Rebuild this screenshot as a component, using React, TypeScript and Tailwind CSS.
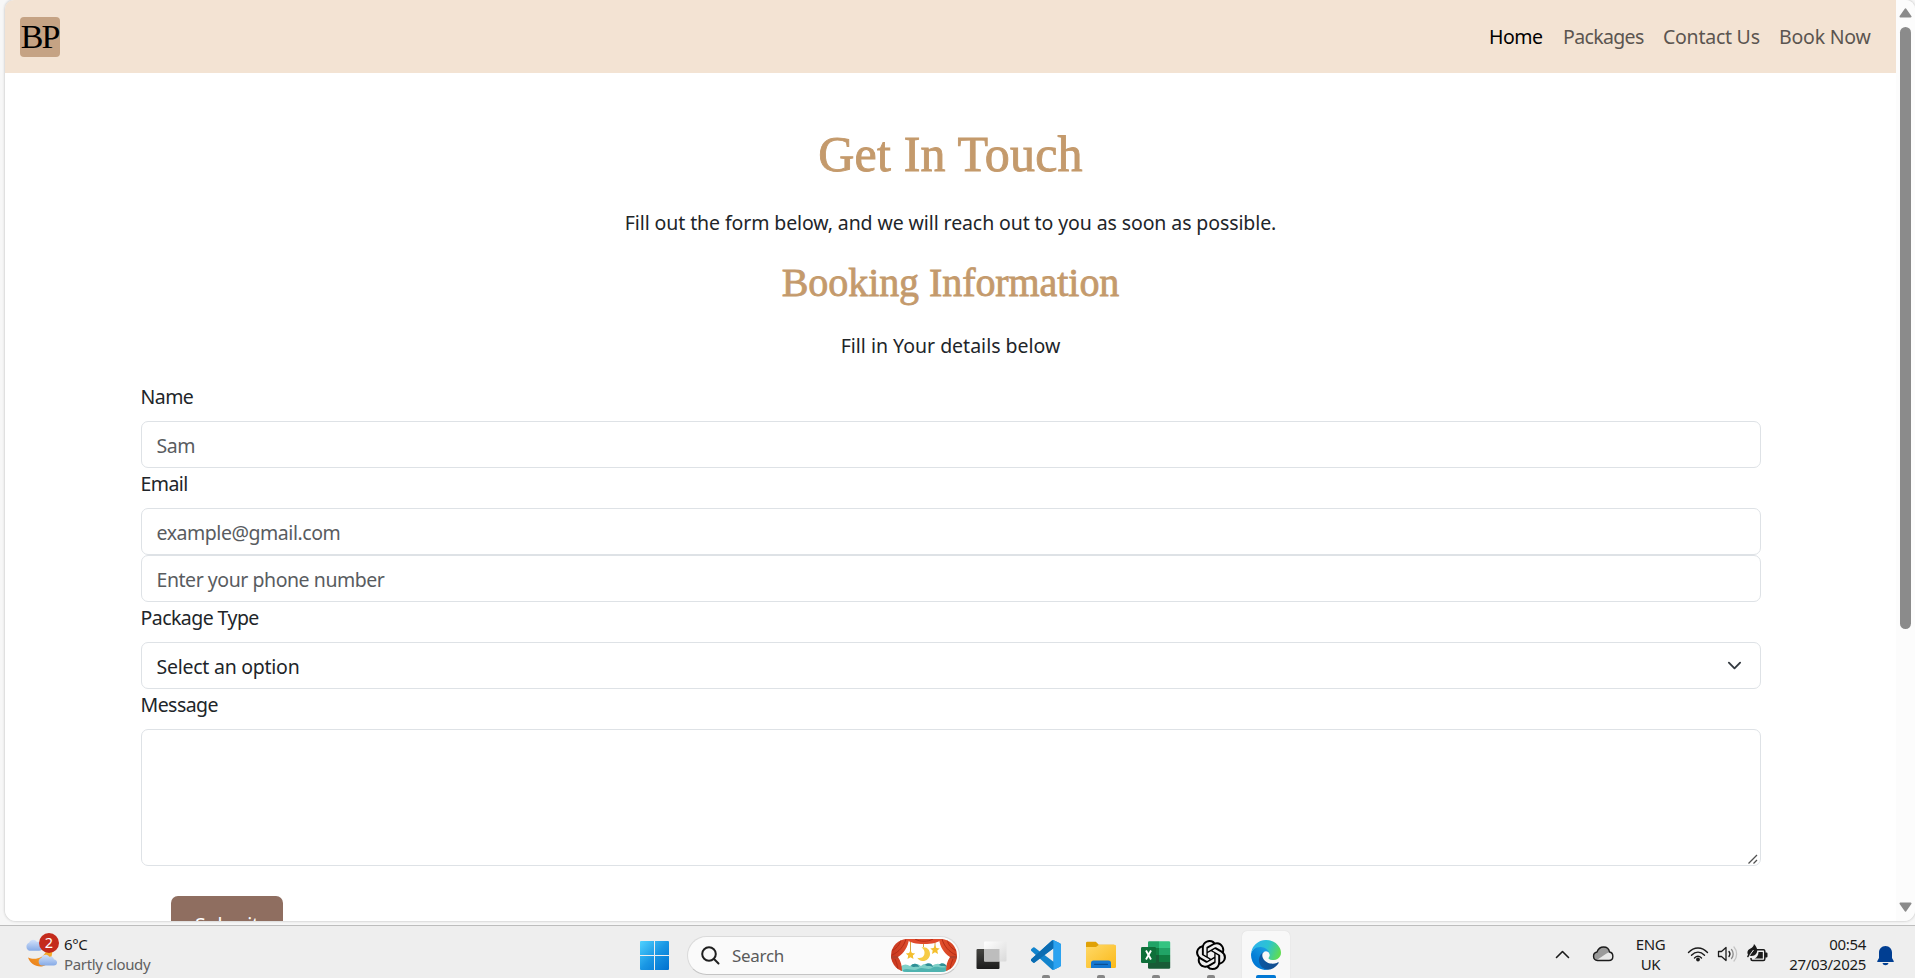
import type { ReactNode } from "react";
import { SiOpenai } from "react-icons/si";

const ui = "font-['Noto_Sans',sans-serif]";
const serif = "font-['Liberation_Serif',serif]";

function Navbar() {
  return (
    <nav className="flex h-[73px] shrink-0 items-start justify-between bg-[#f3e3d3] pl-[15px]">
      <div className={`${serif} mt-[17px] flex h-10 w-10 items-center justify-center overflow-hidden rounded-[4px] bg-[#c5a384] text-[34px] leading-none tracking-[-2px] text-black`}>
        <span className="mr-[1px]">BP</span>
      </div>
      <div className="mt-[22px] mr-[25px] flex text-[19.5px] leading-[30px] text-[#5b5550]">
        <a className="w-[74px] tracking-[-0.5px] text-black">Home</a>
        <a className="w-[100px] tracking-[-0.65px]">Packages</a>
        <a className="w-[116px] tracking-[-0.25px]">Contact Us</a>
        <a className="w-[92px] tracking-[-0.2px] whitespace-nowrap">Book Now</a>
      </div>
    </nav>
  );
}

function Label({ children }: { children: ReactNode }) {
  return <label className="-ml-[0.5px] block h-10 text-[19.5px] leading-[31px] tracking-[-0.55px] whitespace-nowrap text-[#212529]">{children}</label>;
}

function Field({ children }: { children: ReactNode }) {
  return (
    <div className="flex h-[47px] items-center rounded-[7px] border border-[#dee2e6] bg-white px-[15px] pt-[2px] pl-[14.5px] text-[19.5px] leading-[30px] tracking-[-0.45px] text-[#595c5f]">
      {children}
    </div>
  );
}

function BookingPage() {
  return (
    <main className="flex flex-1 flex-col overflow-hidden bg-white">
      <header className="flex flex-col items-center text-[#c49a6c]">
        <h1 className={`${serif} mt-[51px] h-[60px] text-[50px] leading-[60px] tracking-[0.2px] [-webkit-text-stroke:0.9px_#c49a6c]`}>Get In Touch</h1>
        <p className="mt-[23px] text-[19.5px] leading-[31px] tracking-[-0.1px] text-[#212529]">
          Fill out the form below, and we will reach out to you as soon as possible.
        </p>
        <h2 className={`${serif} mt-[21px] h-[48px] text-[40px] leading-[48px] tracking-[-0.07px] [-webkit-text-stroke:0.8px_#c49a6c]`}>Booking Information</h2>
        <p className="mt-[23px] text-[19.5px] leading-[31px] text-[#212529]">Fill in Your details below</p>
      </header>
      <form className="mt-[20px] ml-[136px] w-[1620px]">
        <Label>Name</Label>
        <Field>Sam</Field>
        <Label>Email</Label>
        <Field>example@gmail.com</Field>
        <Field>Enter your phone number</Field>
        <Label>Package Type</Label>
        <Field>
          <span className="flex-1 tracking-[-0.25px] text-[#212529]">Select an option</span>
          <svg className="mr-[3px] -mt-[3px] h-[15px] w-[15px]" viewBox="0 0 16 16" fill="none" stroke="#343a40" strokeWidth="2" strokeLinecap="round" strokeLinejoin="round">
            <path d="m2 5 6 6 6-6" />
          </svg>
        </Field>
        <Label>Message</Label>
        <div className="flex h-[137px] items-end justify-end rounded-[7px] border border-[#dee2e6] bg-white">
          <svg className="mr-[2px] mb-[1px] h-[10px] w-[10px]" viewBox="0 0 10 10" stroke="#505050" strokeWidth="1.3">
            <path d="M0.5 9.5 9 1M5.5 9.5 9 6" />
          </svg>
        </div>
        <div className="mt-[30px] ml-[30px] flex h-[58px] w-[112px] items-center justify-center rounded-[7px] bg-[#8f6e60] text-[19.5px] tracking-[-0.2px] text-white">
          Submit
        </div>
      </form>
    </main>
  );
}

function Scrollbar() {
  return (
    <div className="flex w-[19px] shrink-0 flex-col items-center bg-[#fcfcfc]">
      <svg className="mt-[8px] h-[10px] w-[13px]" viewBox="0 0 13 10">
        <path d="M6.5 1.2 11.6 8.6H1.4z" fill="#8b8b8b" stroke="#8b8b8b" strokeWidth="1.8" strokeLinejoin="round" />
      </svg>
      <div className="mt-[9px] h-[602px] w-[11px] rounded-full bg-[#8b8b8b]" />
      <svg className="mt-auto mb-[9px] h-[10px] w-[13px]" viewBox="0 0 13 10">
        <path d="M6.5 8.8 11.6 1.4H1.4z" fill="#8b8b8b" stroke="#8b8b8b" strokeWidth="1.8" strokeLinejoin="round" />
      </svg>
    </div>
  );
}

function WeatherIcon() {
  return (
    <svg className="h-[36px] w-[36px]" viewBox="0 0 36 36">
      <defs>
        <linearGradient id="cloud" x1="0" y1="0" x2="0" y2="1">
          <stop offset="0" stopColor="#d3e2fa" />
          <stop offset="1" stopColor="#86aae6" />
        </linearGradient>
        <linearGradient id="moon" x1="1" y1="0" x2="0" y2="1">
          <stop offset="0" stopColor="#f9b62c" />
          <stop offset="1" stopColor="#e97a1c" />
        </linearGradient>
      </defs>
      <path d="M4.5 17.800a4.500 4.500 0 0 1-.3-8.400C5.600 6 10 5.800 12 9c3-.8 6 1 6 4.500 0 2.500-1.500 4.300-4 4.300z" fill="url(#cloud)" />
      <path d="M27 15c1.500 8-3 18.500-11.500 18.500C9.500 33.500 5 30 3 24.500c5.500 2.500 15 2 18.500-7z" fill="url(#moon)" />
      <path d="M16.500 32.500a4 4 0 0 1-.2-7.600c1-3.700 6-4.300 8-1.200 3-.8 4.500 1 4.500 2.500 4.500.5 4.200 6.300 0 6.300z" fill="url(#cloud)" />
      <circle cx="24" cy="10" r="10" fill="#c42b1c" />
      <text x="24" y="15.200" textAnchor="middle" fontFamily="Noto Sans" fontSize="14.500" fill="#fff">2</text>
    </svg>
  );
}

function WindowsLogo() {
  return (
    <svg className="h-[29px] w-[29px]" viewBox="0 0 29 29">
      <defs>
        <linearGradient id="win" x1="0" y1="0" x2="29" y2="29" gradientUnits="userSpaceOnUse">
          <stop offset="0" stopColor="#4fd2ff" />
          <stop offset="0.5" stopColor="#1a97e4" />
          <stop offset="1" stopColor="#0070cf" />
        </linearGradient>
      </defs>
      <path d="M1 0h13v14H0V1a1 1 0 0 1 1-1zM15 0h13a1 1 0 0 1 1 1v13H15zM0 15h14v14H1a1 1 0 0 1-1-1zM15 15h14v13a1 1 0 0 1-1 1H15z" fill="url(#win)" />
    </svg>
  );
}

function TheatreArt() {
  return (
    <svg className="h-[33px] w-[66px]" viewBox="0 0 66 33">
      <defs>
        <clipPath id="pill"><rect width="66" height="33" rx="16.500" /></clipPath>
        <linearGradient id="drape" x1="0" y1="0" x2="1" y2="0">
          <stop offset="0" stopColor="#c8371d" />
          <stop offset="0.5" stopColor="#f0603d" />
          <stop offset="1" stopColor="#d2401f" />
        </linearGradient>
      </defs>
      <g clipPath="url(#pill)">
        <rect width="66" height="33" fill="#fff" />
        <path d="M10 27c3-2 6-2 9 0 3-3 7-3 11 0 3-3 7-3 11 0 4-3 8-3 11 0l6-1v8H8z" fill="#7fd0c8" />
        <path d="M20 27c2-4 8-2 8 1-3-1-5 1-8-1zM34 26c2-3 8-2 8 2-3-2-5 0-8-2zM48 26c2-3 7-2 8 2-3-2-5 0-8-2z" fill="#2f8f96" />
        <path d="M12 31c5-3 10 2 15-1s9 2 14-1 9 1 14-1v6H12z" fill="#4fb3b0" />
        <path d="M19.500 0v14M44 0v8M32.500 2v6" stroke="#d9a441" strokeWidth="1" />
        <path d="m19.500 11 1.400 3 3.300.4-2.400 2.200.7 3.300-3-1.700-3 1.700.7-3.300-2.400-2.200 3.300-.4zM44 6l1.400 3 3.300.4-2.400 2.200.7 3.300-3-1.700-3 1.700.7-3.300-2.400-2.200 3.300-.4z" fill="#f4bf2e" />
        <path d="M30.500 8.500c5-1.500 8.500 2 8.500 6.500 0 4.500-4 7.500-8 7-2.500-.4-4-1.800-4.700-3.200 3 .8 6.200-.3 7-3.300.8-3-.3-5.500-2.800-7z" fill="#f6cb45" />
        <path d="M0 0h18C17 8 13 14 7 18c3 4 4 9 4 15H0zM66 0H48c1 8 5 14 11 18-3 4-4 9-4 15h11z" fill="url(#drape)" />
        <path d="M15 0h36c-4 4-10 5-18 5S19 4 15 0z" fill="#e04a2c" />
        <path d="M15 0C13 7 8 13 1 16M10 0C9 6 5 10 0 12M51 0c2 7 7 13 14 16M56 0c1 6 5 10 10 12M4 20c2 4 3 9 3 13M62 20c-2 4-3 9-3 13M24 0c5 3 13 3 18 0" fill="none" stroke="#b52c17" strokeWidth="1" />
        <path d="M0 17h7v2.500H0zM59 17h7v2.500h-7z" fill="#b3402a" />
      </g>
    </svg>
  );
}

function TaskViewIcon() {
  return (
    <svg className="h-[29px] w-[31px]" viewBox="0 0 31 29">
      <defs>
        <linearGradient id="tvd" x1="0" y1="0" x2="0" y2="1"><stop offset="0" stopColor="#454542" /><stop offset="1" stopColor="#1c1c1c" /></linearGradient>
        <linearGradient id="tvl" x1="0" y1="0" x2="1" y2="1"><stop offset="0" stopColor="#fff" /><stop offset="1" stopColor="#d9d9d9" /></linearGradient>
      </defs>
      <rect x="0.500" y="8" width="23" height="20" rx="1" fill="url(#tvd)" />
      <rect x="8" y="0.500" width="22.500" height="20" rx="1" fill="url(#tvl)" />
      <path d="M8 8h15.500v12.500H9a1 1 0 0 1-1-1z" fill="#bdbdbd" />
    </svg>
  );
}

function VsCodeIcon() {
  return (
    <svg className="h-[30px] w-[30px]" viewBox="0 0 24 24">
      <path d="M23.150 2.587 18.210.21a1.494 1.494 0 0 0-1.705.29l-9.460 8.630-4.120-3.128a.999.999 0 0 0-1.276.057L.327 7.261A1 1 0 0 0 .326 8.740L3.899 12 .326 15.260a1 1 0 0 0 .001 1.479L1.650 17.940a.999.999 0 0 0 1.276.057l4.120-3.128 9.460 8.630a1.492 1.492 0 0 0 1.704.29l4.942-2.377A1.500 1.500 0 0 0 24 20.060V3.939a1.500 1.500 0 0 0-.85-1.352zm-5.146 14.861L10.826 12l7.178-5.448v10.896z" fill="#1284cd" />
      <path d="M16.500.5 3.900 12 .33 15.260a1 1 0 0 0 0 1.480l1.320 1.200a1 1 0 0 0 1.280.06L18 6.550V.3z" fill="#0a6cb2" />
      <path d="M18 .2 23.150 2.590A1.500 1.500 0 0 1 24 3.940v16.120a1.500 1.500 0 0 1-.85 1.350L18.210 23.790a1.500 1.500 0 0 1-1.200.03c.6-.2 1-.7 1-1.400V1.600c0-.7-.4-1.200-1-1.400z" fill="#2ba2f0" />
    </svg>
  );
}

function FolderIcon() {
  return (
    <svg className="h-[28px] w-[30px]" viewBox="0 0 30 28">
      <defs><linearGradient id="fold" x1="0" y1="0" x2="1" y2="1"><stop offset="0" stopColor="#ffd968" /><stop offset="1" stopColor="#fbb919" /></linearGradient></defs>
      <path d="M0 2a1.300 1.300 0 0 1 1.300-1.300h8.500l3 3H28v8H0z" fill="#e0a106" />
      <path d="M0 6h10l3-2.300h15.700A1.300 1.300 0 0 1 30 5v20.700a1.300 1.300 0 0 1-1.300 1.300H1.300A1.300 1.300 0 0 1 0 25.700z" fill="url(#fold)" />
      <path d="M5 27v-5a2.500 2.500 0 0 1 2.500-2.500h15A2.500 2.500 0 0 1 25 22v5z" fill="#1377d1" />
      <path d="M8.500 23.300h13" stroke="#0b4f94" strokeWidth="1.200" strokeLinecap="round" />
    </svg>
  );
}

function ExcelIcon() {
  return (
    <svg className="h-[28px] w-[30px]" viewBox="0 0 30 28">
      <path d="M7 1.500A1.300 1.300 0 0 1 8.300.2H18V7H7z" fill="#21a366" />
      <path d="M18 .2h9.900a1.300 1.300 0 0 1 1.300 1.300V7H18z" fill="#33c481" />
      <path d="M7 7h11v7H7z" fill="#107c41" />
      <path d="M18 7h11.200v7H18z" fill="#21a366" />
      <path d="M7 14h11v7H7z" fill="#185c37" />
      <path d="M18 14h11.200v7H18z" fill="#107c41" />
      <path d="M7 21h22.200v5.500a1.300 1.300 0 0 1-1.300 1.300H8.300A1.300 1.300 0 0 1 7 26.500z" fill="#185c37" />
      <rect x="0" y="6" width="15" height="16" rx="1.300" fill="#0e6f39" />
      <path d="m5 9.500 5 9M10 9.500l-5 9" stroke="#fff" strokeWidth="1.900" />
    </svg>
  );
}

function EdgeIcon() {
  return (
    <svg className="h-[30px] w-[30px]" viewBox="0 0 256 256">
      <defs>
        <linearGradient id="e1" x1="63" y1="178" x2="242" y2="178" gradientUnits="userSpaceOnUse"><stop offset="0" stopColor="#0c59a4" /><stop offset="1" stopColor="#114a8b" /></linearGradient>
        <linearGradient id="e2" x1="158" y1="100" x2="46" y2="222" gradientUnits="userSpaceOnUse"><stop offset="0" stopColor="#1b9de2" /><stop offset="0.670" stopColor="#0680d7" /><stop offset="1" stopColor="#0078d4" /></linearGradient>
        <linearGradient id="e3" x1="20" y1="40" x2="240" y2="130" gradientUnits="userSpaceOnUse"><stop offset="0" stopColor="#2fb4ea" /><stop offset="0.500" stopColor="#2bc3d2" /><stop offset="1" stopColor="#5fdc52" /></linearGradient>
      </defs>
      <path fill="url(#e1)" d="M231 190.500c-3.400 1.800-6.900 3.400-10.500 4.700a101.700 101.700 0 0 1-35.900 6.400c-47.300 0-88.500-32.500-88.500-74.300a31.500 31.500 0 0 1 16.400-27.300c-42.800 1.800-53.800 46.400-53.800 72.500 0 74 68.100 81.400 82.800 81.400 7.900 0 19.800-2.300 27-4.600l1.300-.4a128.300 128.300 0 0 0 66.600-52.800 4 4 0 0 0-5.400-5.600z" />
      <path fill="url(#e2)" d="M105.700 241.400a79.200 79.200 0 0 1-22.700-21.300 80.700 80.700 0 0 1 29.500-120c3.200-1.500 8.500-4.100 15.600-4a32.400 32.400 0 0 1 25.700 13 31.900 31.900 0 0 1 6.300 18.700c0-.2 24.500-79.600-80-79.600-43.900 0-80 41.600-80 78.200a130.200 130.200 0 0 0 12.100 56 128 128 0 0 0 156.400 67 75.500 75.500 0 0 1-62.800-8z" />
      <path fill="url(#e3)" d="M152.300 148.900c-.9 1-3.400 2.500-3.400 5.600 0 2.600 1.700 5.200 4.800 7.300 14.300 10 41.400 8.600 41.500 8.600a59.600 59.600 0 0 0 30.300-8.300 61.400 61.400 0 0 0 30.400-52.900c.3-22.400-8-37.300-11.300-43.900C223.500 23.900 177.700 0 128 0A128 128 0 0 0 0 126.200c.5-36.500 36.800-66 80-66 3.500 0 23.500.3 42 10a72.600 72.600 0 0 1 30.900 29.300c6.100 10.600 7.200 24.100 7.200 29.500s-2.700 13.300-7.800 19.900z" />
    </svg>
  );
}

function AppButton({ active = false, running = true, children }: { active?: boolean; running?: boolean; children: ReactNode }) {
  return (
    <div className={active ? "flex h-[48px] w-[48px] flex-col items-center rounded-t-[5px] bg-[#f8f8f8] shadow-[0_0_1px_#ccc]" : "flex h-[48px] w-[48px] flex-col items-center"}>
      <div className="mt-[9px] flex h-[30px] items-center">{children}</div>
      {running && <div className={active ? "mt-[5px] h-[4px] w-[20px] rounded-t-[2px] bg-[#0078d4]" : "mt-[5px] h-[4px] w-[8px] rounded-t-[2px] bg-[#868686]"} />}
    </div>
  );
}

function SystemTray() {
  return (
    <div className="ml-auto flex h-[52px] items-start text-[15px] leading-[20px] text-[#1b1b1b]">
      <svg className="mt-[24px] h-[9px] w-[15px]" viewBox="0 0 15 9" fill="none" stroke="#1b1b1b" strokeWidth="1.600" strokeLinecap="round" strokeLinejoin="round"><path d="M1.500 7.500 7.500 1.500l6 6" /></svg>
      <svg className="mt-[20px] ml-[22px] h-[16px] w-[22px]" viewBox="0 0 22 16">
        <path d="M5.500 14.500A4.300 4.300 0 0 1 5 6C6.300 2.600 9 1 11.500 1c3.300 0 5.600 2.200 6 5 4.500.7 4.600 8.500-.5 8.500z" fill="#e8e8e8" />
        <path d="M5 6C6.300 2.600 9 1 11.500 1c3.300 0 5.600 2.200 6 5l-3 1.500-10 6.800C0 13.500.8 7 5 6z" fill="#9a9a9a" />
        <path d="M5.500 14.500A4.300 4.300 0 0 1 5 6C6.300 2.600 9 1 11.500 1c3.300 0 5.600 2.200 6 5 4.500.7 4.600 8.500-.5 8.500z" fill="none" stroke="#1b1b1b" strokeWidth="1.400" />
      </svg>
      <div className="mt-[8px] ml-[15px] w-[43px] text-center tracking-[-0.4px]">
        <div>ENG</div>
        <div>UK</div>
      </div>
      <svg className="mt-[20px] ml-[15px] h-[16px] w-[22px]" viewBox="0 0 22 16" fill="none" stroke="#1b1b1b" strokeWidth="1.400" strokeLinecap="round">
        <path d="M1.500 6.500c5.500-6 13.500-6 19 0M4.500 9.300c4-4.200 9-4.200 13 0M7.500 12c2.300-2.200 4.700-2.200 7 0" />
        <circle cx="11" cy="13.500" r="1.200" fill="#1b1b1b" />
      </svg>
      <svg className="mt-[19px] ml-[8px] h-[18px] w-[22px]" viewBox="0 0 22 18" fill="none" stroke="#1b1b1b" strokeWidth="1.300" strokeLinecap="round" strokeLinejoin="round">
        <path d="M1.500 6.500h3L9 2.500v13l-4.500-4h-3z" />
        <path d="M12 6.500c1.200 1.500 1.200 3.500 0 5" />
        <path d="M14.500 4.500c2.200 2.500 2.200 6.500 0 9" stroke="#8a8a8a" />
        <path d="M17 2c3.500 4 3.500 10 0 14" stroke="#c4c4c4" />
      </svg>
      <svg className="mt-[18px] ml-[8px] h-[19px] w-[21px]" viewBox="0 0 21 19">
        <path d="M9.500 5.800h7A1.300 1.300 0 0 1 17.800 7v8a1.500 1.500 0 0 1-1.500 1.500H5.500A1.500 1.500 0 0 1 4 15v-1" fill="none" stroke="#1b1b1b" strokeWidth="1.500" />
        <path d="M18 8.500h1.500a1 1 0 0 1 1 1v3a1 1 0 0 1-1 1H18zM11.500 8h4.300v6.500H7.500c2-.8 4-3 4-6.500z" fill="#1b1b1b" />
        <path d="M7 0c3 3 4.500 7 2 10-1.500 2-4.500 2.500-6.500 1.500L1 13.500 0 12.500l1-1.800C-.5 8 1 5.500 3.500 4.500 5.500 3.600 6.500 2.500 7 0z" fill="#1b1b1b" />
        <path d="M2.500 11.500 6.500 6" stroke="#eee" strokeWidth="1" />
      </svg>
      <div className="mt-[8px] ml-[16px] w-[82px] text-right tracking-[-0.3px]">
        <div>00:54</div>
        <div>27/03/2025</div>
      </div>
      <svg className="mt-[20px] mr-[21px] ml-[11px] h-[20px] w-[17px]" viewBox="0 0 17 20" fill="#003e92">
        <path d="M8.500 0C12.500 0 15 3 15 6.500v5.500l1.800 3.200c.2.500 0 .8-.5.800H.7c-.5 0-.7-.3-.5-.8L2 12V6.500C2 3 4.500 0 8.500 0zM5.500 17h6c-.4 1.500-1.500 2.200-3 2.200s-2.600-.7-3-2.200z" />
      </svg>
    </div>
  );
}

function Taskbar() {
  return (
    <footer className="flex h-[53px] shrink-0 overflow-hidden border-t border-[#bdbdbd] bg-[#eeeeee]">
      <div className="flex w-[640px] items-start pl-[25px]">
        <div className="mt-[7px]"><WeatherIcon /></div>
        <div className="mt-[8px] ml-[3px] text-[15px] leading-[20px] tracking-[-0.35px] text-[#1b1b1b]">
          <div>6°C</div>
          <div className="text-[#616161]">Partly cloudy</div>
        </div>
      </div>
      <div className="mt-[15px]"><WindowsLogo /></div>
      <div className="mt-[10px] ml-[18px] flex h-[39px] w-[273px] items-center rounded-full border border-[#dadada] border-b-[#c4c4c4] bg-[#fafafa] pr-[2px] pl-[13px]">
        <svg className="h-[19px] w-[19px]" viewBox="0 0 19 19" fill="none" stroke="#1f1f1f" strokeWidth="2" strokeLinecap="round"><circle cx="8" cy="8" r="6.800" /><path d="m13 13 4.500 4.500" /></svg>
        <span className="ml-[12px] flex-1 text-[17px] tracking-[-0.3px] text-[#5a5a5a]">Search</span>
        <TheatreArt />
      </div>
      <div className="mt-[5px] ml-[7px] flex gap-[7px]">
        <AppButton running={false}><TaskViewIcon /></AppButton>
        <AppButton><VsCodeIcon /></AppButton>
        <AppButton><FolderIcon /></AppButton>
        <AppButton><ExcelIcon /></AppButton>
        <AppButton><SiOpenai className="h-[30px] w-[30px] text-black" /></AppButton>
        <AppButton active><EdgeIcon /></AppButton>
      </div>
      <SystemTray />
    </footer>
  );
}

export default function App() {
  return (
    <div className={`${ui} flex h-[978px] w-[1915px] flex-col overflow-hidden bg-[#f7f7f7]`}>
      <div className="mb-[4px] ml-[5px] flex h-[921px] shrink-0 overflow-hidden rounded-tl-[9px] rounded-tr-[9px] rounded-b-[11px] shadow-[0_0_2px_1px_#d8d8d8]">
        <div className="flex flex-1 flex-col overflow-hidden">
          <Navbar />
          <BookingPage />
        </div>
        <Scrollbar />
      </div>
      <Taskbar />
    </div>
  );
}
